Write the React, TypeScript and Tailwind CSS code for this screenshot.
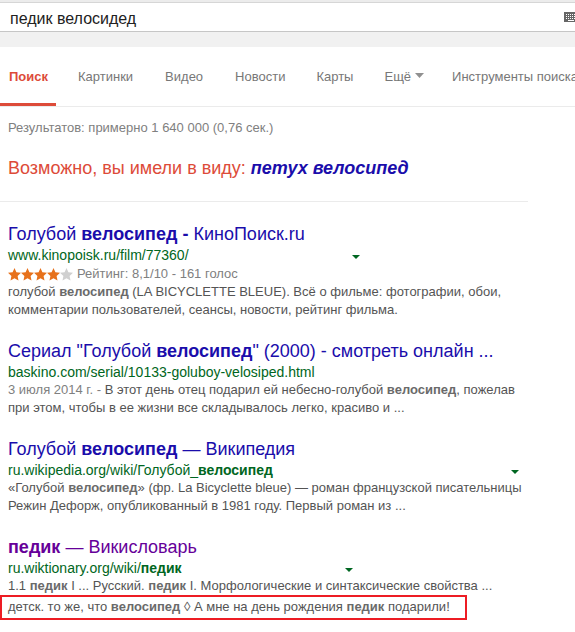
import React from "react";

const green = "text-[#006621]";

function DropArrow({ left }: { left: string }) {
  return (
    <span className={`absolute top-[9px] ${left}`}>
      <svg width="8" height="4" viewBox="0 0 8 4">
        <path d="M0 0h8L4 4z" fill="#006621" />
      </svg>
    </span>
  );
}

function Star({ on }: { on: boolean }) {
  return (
    <svg width="13" height="13" viewBox="0 0 13 13">
      <path
        d="M6.5 0L8.4 4.3L13 4.8L9.6 7.9L10.5 12.5L6.5 10.2L2.5 12.5L3.4 7.9L0 4.8L4.6 4.3Z"
        fill={on ? "#e7711b" : "#d0d0d0"}
      />
    </svg>
  );
}

function Keyboard() {
  const keys = [];
  for (let r = 0; r < 3; r++) {
    for (let c = 0; c < 5; c++) {
      keys.push(<rect key={`${r}-${c}`} x={2 + c * 2} y={2 + r * 2} width="1" height="1" fill="#fff" />);
    }
  }
  return (
    <svg width="14" height="10" viewBox="0 0 14 10" className="shrink-0 -mr-[3px]">
      <rect width="14" height="10" fill="#666" />
      {keys}
      <rect x="4" y="8" width="6" height="1" fill="#fff" />
    </svg>
  );
}

export default function App() {
  return (
    <div className="w-[575px] h-[632px] overflow-hidden bg-white font-['Liberation_Sans',Arial,sans-serif]">
      {/* search box */}
      <div className="h-[3px] bg-[#ececec] border-b border-[#d6d6d6]" />
      <div className="h-[29px] flex items-center justify-between pl-[10px] border-b border-[#c6c6c6] text-[16px] text-[#222]">
        <span className="pt-[3px]">педик велосидед</span>
        <Keyboard />
      </div>
      <div className="h-[15px] bg-[#f1f1f1]" />

      {/* tabs */}
      <div className="h-[60px] flex items-stretch border-b border-[#ebebeb] text-[13px] text-[#777] whitespace-nowrap">
        <div className="flex items-center pl-[9px] pr-[8px] pt-[3px] border-b-[3px] border-[#dd4b39] font-bold text-[#dd4b39]">
          Поиск
        </div>
        <div className="flex items-center ml-[22px]">Картинки</div>
        <div className="flex items-center ml-[32px]">Видео</div>
        <div className="flex items-center ml-[32px]">Новости</div>
        <div className="flex items-center ml-[31px]">Карты</div>
        <div className="flex items-center ml-[31px] gap-[4px]">
          Ещё
          <svg width="9" height="5" viewBox="0 0 9 5" className="-mt-[3px]">
            <path d="M0 0h9L4.5 5z" fill="#909090" />
          </svg>
        </div>
        <div className="flex items-center ml-[28px]">Инструменты поиска</div>
      </div>

      {/* stats + suggestion */}
      <div className="pl-[8px] mt-[13px] leading-[16px] text-[13px] text-[#808080]">
        Результатов: примерно 1 640 000 (0,76 сек.)
      </div>
      <div className="pl-[8px] mt-[21px] leading-[22px] text-[18px] text-[#dd4b39]">
        Возможно, вы имели в виду:{" "}
        <span className="font-bold italic text-[#1a0dab]">петух велосипед</span>
      </div>
      <div className="mt-[22px] w-[528px] h-px bg-[#ebebeb]" />

      {/* result 1 */}
      <div className="mt-[21px] text-[13px] text-[#545454] whitespace-nowrap">
        <div className="pl-[8px] leading-[22px] text-[18px] text-[#1a0dab]">
          Голубой <b>велосипед -</b> КиноПоиск.ru
        </div>
        <div className={`relative mt-[1px] pl-[8px] leading-[18px] text-[14px] ${green}`}>
          www.kinopoisk.ru/film/77360/
          <DropArrow left="left-[352px]" />
        </div>
        <div className="mt-[1px] pl-[8px] h-[18px] flex items-center text-[#808080]">
          <Star on />
          <Star on />
          <Star on />
          <Star on />
          <Star on={false} />
          <span className="ml-[4px]">Рейтинг: 8,1/10 - 161 голос</span>
        </div>
        <div className="pl-[8px] leading-[18px]">
          голубой <b className="text-[#6a6a6a]">велосипед</b> (LA BICYCLETTE BLEUE). Всё о фильме: фотографии, обои,
          <br />
          комментарии пользователей, сеансы, новости, рейтинг фильма.
        </div>
      </div>

      {/* result 2 */}
      <div className="mt-[21px] text-[13px] text-[#545454] whitespace-nowrap">
        <div className="pl-[8px] leading-[22px] text-[18px] text-[#1a0dab]">
          Сериал "Голубой <b>велосипед</b>" (2000) - смотреть онлайн ...
        </div>
        <div className={`relative mt-[1px] pl-[8px] leading-[18px] text-[14px] ${green}`}>
          baskino.com/serial/10133-goluboy-velosiped.html
        </div>
        <div className="pl-[8px] leading-[18px]">
          <span className="text-[#808080]">3 июля 2014 г. - </span>В этот день отец подарил ей небесно-голубой{" "}
          <b className="text-[#6a6a6a]">велосипед</b>, пожелав
          <br />
          при этом, чтобы в ее жизни все складывалось легко, красиво и ...
        </div>
      </div>

      {/* result 3 */}
      <div className="mt-[21px] text-[13px] text-[#545454] whitespace-nowrap">
        <div className="pl-[8px] leading-[22px] text-[18px] text-[#1a0dab]">
          Голубой <b>велосипед</b> — Википедия
        </div>
        <div className={`relative mt-[1px] pl-[8px] leading-[18px] text-[14px] ${green}`}>
          ru.wikipedia.org/wiki/Голубой_<b>велосипед</b>
          <DropArrow left="left-[511px]" />
        </div>
        <div className="pl-[8px] leading-[18px]">
          «Голубой <b className="text-[#6a6a6a]">велосипед</b>» (фр. La Bicyclette bleue) — роман французской писательницы
          <br />
          Режин Дефорж, опубликованный в 1981 году. Первый роман из ...
        </div>
      </div>

      {/* result 4 */}
      <div className="mt-[21px] text-[13px] text-[#545454] whitespace-nowrap">
        <div className="pl-[8px] leading-[22px] text-[18px] text-[#660099]">
          <b>педик</b> — Викисловарь
        </div>
        <div className={`relative mt-[1px] pl-[8px] leading-[18px] text-[14px] ${green}`}>
          ru.wiktionary.org/wiki/<b>педик</b>
          <DropArrow left="left-[345px]" />
        </div>
        <div className="pl-[8px] leading-[18px]">
          1.1 <b className="text-[#6a6a6a]">педик</b> I ... Русский. <b className="text-[#6a6a6a]">педик</b> I. Морфологические и синтаксические свойства ...
        </div>
        <div className="w-[467px] border-2 border-[#ed1c24] pl-[6px] pt-[1px] pb-[2px] leading-[18px]">
          детск. то же, что <b className="text-[#6a6a6a]">велосипед</b> ◊ А мне на день рождения{" "}
          <b className="text-[#6a6a6a]">педик</b> подарили!
        </div>
      </div>
    </div>
  );
}
